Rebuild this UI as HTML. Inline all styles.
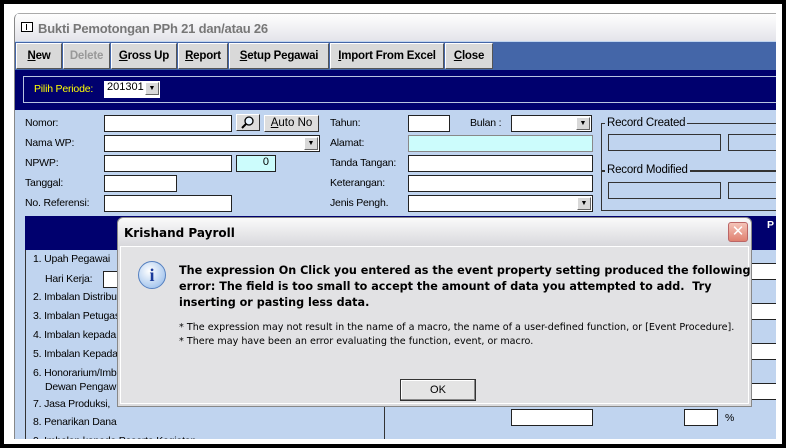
<!DOCTYPE html>
<html><head><style>
*{box-sizing:border-box;margin:0;padding:0}
body{width:786px;height:448px;background:#fff;position:relative;overflow:hidden;font-family:"Liberation Sans",Arial,sans-serif;font-size:11px;color:#000}
.frame{position:absolute;left:0;top:0;width:786px;height:448px;border:4px solid #000;z-index:50;pointer-events:none}
.win{position:absolute;left:14px;top:13px;width:762px;height:426px;background:#c0d4ef;border-left:1px solid #888;border-radius:6px 0 0 0;overflow:hidden}
.tb{position:absolute;left:0;top:0;width:100%;height:28px;background:linear-gradient(#fefefe,#e4e4ea);border-top:1px solid #aaa;font-size:13px;font-weight:bold;color:#777;padding:7px 0 0 23px;letter-spacing:-0.2px}
.ico{position:absolute;left:6px;top:8px;width:12px;height:10px;border:1px solid #000;background:#fff}
.ico:before{content:"";position:absolute;left:1px;top:1px;width:3px;height:6px;border-right:1px solid #000}
.tool{position:absolute;left:0;top:29px;width:100%;height:28px;background:#4466a8}
.btn{position:absolute;top:1px;height:26px;background:#d9d9d9;border:1px solid;border-color:#fff #555 #555 #fff;font-weight:bold;font-size:11.5px;text-align:center;line-height:24px;letter-spacing:-0.2px}
.btn u{text-decoration:underline}
.band{position:absolute;left:0;top:57px;width:100%;height:40px;background:#00006e}
.inner{position:absolute;left:8px;top:6px;right:0;height:27px;border:1px solid #b8c4e0;border-right:none}
.lbl{position:absolute;font-size:10.5px;letter-spacing:-0.2px}
.in{position:absolute;height:17px;background:#fff;border:1px solid #222}
.dd{position:absolute;right:1px;top:1px;width:14px;height:13px;background:#d8d8d8;border:1px solid;border-color:#fff #666 #666 #fff;font-size:7px;text-align:center;line-height:12px}
.grp{position:absolute;border:1px solid #333;}
.row{position:absolute;left:10px;font-size:10.5px;letter-spacing:-0.2px}
.dlg{position:absolute;left:117px;top:217px;width:635px;height:190px;background:#dcdcde;border:1px solid #888;border-radius:6px 6px 0 0;z-index:10}
.dtitle{position:absolute;left:0;top:0;width:100%;height:28px;background:linear-gradient(#fafafa,#d8d8dc);border-radius:6px 6px 0 0;font-weight:bold;padding:8px 0 0 6px;font-family:"DejaVu Sans",sans-serif;font-size:12px}
.dbody{position:absolute;left:2px;top:28px;right:2px;bottom:2px;border:1px solid #fff;background:#e2e2e4}
.msg{position:absolute;left:58px;top:16px;font-family:"DejaVu Sans",sans-serif;font-weight:bold;font-size:11.2px;line-height:16px;white-space:nowrap}
.sm{position:absolute;left:58px;top:74px;font-family:"DejaVu Sans",sans-serif;font-size:9.6px;line-height:14px;white-space:nowrap}
</style></head><body>
<div class="win">
 <div class="tb"><div class="ico"></div>Bukti Pemotongan PPh 21 dan/atau 26</div>
 <div class="tool">
  <div class="btn" style="left:1px;width:46px"><u>N</u>ew</div>
  <div class="btn" style="left:48px;width:47px;color:#999">Delete</div>
  <div class="btn" style="left:96px;width:66px"><u>G</u>ross Up</div>
  <div class="btn" style="left:163px;width:50px"><u>R</u>eport</div>
  <div class="btn" style="left:214px;width:100px"><u>S</u>etup Pegawai</div>
  <div class="btn" style="left:315px;width:114px"><u>I</u>mport From Excel</div>
  <div class="btn" style="left:430px;width:48px"><u>C</u>lose</div>
 </div>
 <div class="band"><div class="inner">
  <span class="lbl" style="left:10px;top:6px;color:#ff0">Pilih Periode:</span>
  <div class="in" style="left:80px;top:4px;width:56px;border:none">&nbsp;201301<div class="dd">▼</div></div>
 </div></div>
 <span class="lbl" style="left:10px;top:104px">Nomor:</span>
 <span class="lbl" style="left:10px;top:124px">Nama WP:</span>
 <span class="lbl" style="left:10px;top:144px">NPWP:</span>
 <span class="lbl" style="left:10px;top:164px">Tanggal:</span>
 <span class="lbl" style="left:10px;top:184px">No. Referensi:</span>
 <div class="in" style="left:89px;top:102px;width:128px"></div>
 <div class="in" style="left:221px;top:101px;width:24px;background:#ddd;border-color:#fff #333 #333 #fff"><svg width="22" height="15" viewBox="0 0 22 15"><circle cx="12" cy="6" r="4" fill="#e8f4ff" stroke="#000" stroke-width="1.3"/><line x1="9" y1="9" x2="5" y2="13" stroke="#000" stroke-width="2"/></svg></div>
 <div class="in" style="left:249px;top:102px;width:55px;background:#ddd;border-color:#fff #333 #333 #fff;text-align:center;font-size:11.5px;line-height:15px"><u>A</u>uto No</div>
 <div class="in" style="left:89px;top:122px;width:216px"><div class="dd">▼</div></div>
 <div class="in" style="left:89px;top:142px;width:128px"></div>
 <div class="in" style="left:221px;top:142px;width:40px;background:#ccfcfc;text-align:right;padding-right:6px">0</div>
 <div class="in" style="left:89px;top:162px;width:73px"></div>
 <div class="in" style="left:89px;top:182px;width:128px"></div>
 <span class="lbl" style="left:315px;top:104px">Tahun:</span>
 <span class="lbl" style="left:315px;top:124px">Alamat:</span>
 <span class="lbl" style="left:315px;top:144px">Tanda Tangan:</span>
 <span class="lbl" style="left:315px;top:164px">Keterangan:</span>
 <span class="lbl" style="left:315px;top:184px">Jenis Pengh.</span>
 <span class="lbl" style="left:455px;top:104px">Bulan :</span>
 <div class="in" style="left:393px;top:102px;width:42px"></div>
 <div class="in" style="left:496px;top:102px;width:81px"><div class="dd">▼</div></div>
 <div class="in" style="left:393px;top:122px;width:185px;background:#ccfcfc;border-color:#888"></div>
 <div class="in" style="left:393px;top:142px;width:185px"></div>
 <div class="in" style="left:393px;top:162px;width:185px"></div>
 <div class="in" style="left:393px;top:182px;width:185px"><div class="dd">▼</div></div>
 <div class="grp" style="left:586px;top:110px;width:200px;height:48px"></div>
 <span class="lbl" style="left:590px;top:104px;background:#c0d4ef;padding:0 2px;font-size:11.5px">Record Created</span>
 <div class="in" style="left:593px;top:121px;width:113px;background:#c0d4ef;border-color:#333"></div>
 <div class="in" style="left:713px;top:121px;width:60px;background:#c0d4ef;border-color:#333"></div>
 <div class="grp" style="left:586px;top:158px;width:200px;height:40px"></div>
 <span class="lbl" style="left:590px;top:151px;background:#c0d4ef;padding:0 2px;font-size:11.5px">Record Modified</span>
 <div class="in" style="left:593px;top:169px;width:113px;background:#c0d4ef;border-color:#333"></div>
 <div class="in" style="left:713px;top:169px;width:60px;background:#c0d4ef;border-color:#333"></div>
 <div style="position:absolute;left:10px;top:203px;width:752px;height:34px;background:#00006e"></div>
 <span class="lbl" style="left:752px;top:206px;color:#fff;font-weight:bold">P</span>
 <div style="position:absolute;left:10px;top:237px;width:360px;height:200px;border:1px solid #333;border-top:none"></div>
 <span class="row" style="left:18px;top:240px">1. Upah Pegawai</span>
 <span class="row" style="left:30px;top:260px">Hari Kerja:</span>
 <div class="in" style="left:88px;top:258px;width:20px"></div>
 <span class="row" style="left:18px;top:278px">2. Imbalan Distribu</span>
 <span class="row" style="left:18px;top:297px">3. Imbalan Petugas</span>
 <span class="row" style="left:18px;top:316px">4. Imbalan kepada</span>
 <span class="row" style="left:18px;top:335px">5. Imbalan Kepada</span>
 <span class="row" style="left:18px;top:354px">6. Honorarium/Imb</span>
 <span class="row" style="left:30px;top:368px">Dewan Pengaw</span>
 <span class="row" style="left:18px;top:385px">7. Jasa Produksi,</span>
 <span class="row" style="left:18px;top:403px">8. Penarikan Dana</span>
 <span class="row" style="left:18px;top:422px">9. Imbalan kepada Peserta Kegiatan</span>
 <div class="in" style="left:496px;top:396px;width:82px"></div>
 <div class="in" style="left:669px;top:396px;width:34px"></div>
 <span class="lbl" style="left:710px;top:399px">%</span>
 <div class="in" style="left:736px;top:250px;width:30px"></div>
 <div class="in" style="left:736px;top:290px;width:30px"></div>
 <div class="in" style="left:736px;top:330px;width:30px"></div>
 <div class="in" style="left:736px;top:370px;width:30px"></div>
</div>
<div class="dlg">
 <div class="dtitle">Krishand Payroll</div>
 <div style="position:absolute;right:3px;top:4px;width:20px;height:20px;border-radius:3px;background:linear-gradient(#f4c4b8,#e08070);border:1px solid #b66;color:#fff;font-size:15px;text-align:center;line-height:18px">✕</div>
 <div class="dbody">
  <div style="position:absolute;left:17px;top:14px;width:28px;height:28px;border-radius:50%;background:radial-gradient(circle at 40% 35%,#fff,#8ab4e8);border:1px solid #5580c0;color:#1a3a9a;font:bold 18px 'Liberation Serif',serif;text-align:center;line-height:26px">i</div>
  <div class="msg">The expression On Click you entered as the event property setting produced the following<br>error: The field is too small to accept the amount of data you attempted to add.&nbsp; Try<br>inserting or pasting less data.</div>
  <div class="sm">* The expression may not result in the name of a macro, the name of a user-defined function, or [Event Procedure].<br>* There may have been an error evaluating the function, event, or macro.</div>
  <div style="position:absolute;left:279px;top:132px;width:76px;height:22px;background:#e4e4e4;border:1px solid #333;box-shadow:inset -1px -1px #888,inset 1px 1px #fff;text-align:center;line-height:20px;font-size:11px">OK</div>
 </div>
</div>
<div class="frame"></div>
</body></html>
